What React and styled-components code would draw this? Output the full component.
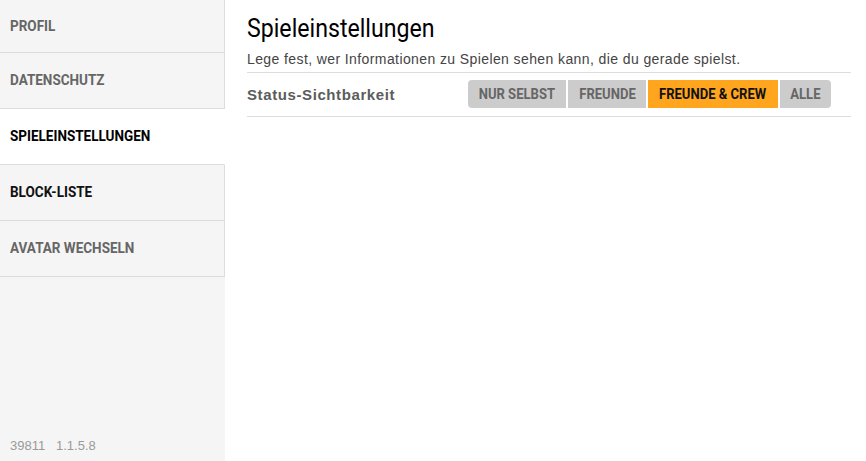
import React from "react";
import styled, { createGlobalStyle } from "styled-components";

const Global = createGlobalStyle`
  html, body { margin: 0; padding: 0; height: 100%; background: #fff; }
  #root { height: 100%; }
  * { box-sizing: border-box; }
`;

const Page = styled.div`
  display: flex;
  width: 866px;
  height: 461px;
  overflow: hidden;
`;

const Sidebar = styled.nav`
  width: 225px;
  flex: none;
  background: #f5f5f5;
  display: flex;
  flex-direction: column;
`;

const NavItem = styled.div`
  height: 56px;
  flex: none;
  display: flex;
  align-items: center;
  padding-left: 10px;
  padding-bottom: 1px;
  background: ${(p) => (p.$active ? "#fff" : "#f5f5f5")};
  border-right: 1px solid ${(p) => (p.$active ? "#fff" : "#dcdcdc")};
  border-bottom: 1px solid #dcdcdc;
  &:first-child { height: 53px; }
`;

/* condensed look: no condensed family is installed, so Roboto is narrowed */
const Condensed = styled.span`
  display: inline-block;
  white-space: nowrap;
  font-family: Roboto, "Liberation Sans", sans-serif;
  font-weight: ${(p) => p.$weight || 700};
  font-size: ${(p) => p.$size || 15}px;
  transform: scaleX(${(p) => p.$scale || 0.9});
  transform-origin: ${(p) => p.$origin || "left"} center;
  color: ${(p) => p.$color || "inherit"};
`;

const Footer = styled.div`
  margin-top: auto;
  padding: 0 0 8px 10px;
  font-family: "Liberation Sans", Arial, sans-serif;
  font-size: 13px;
  color: #9a9a9a;
  white-space: pre;
`;

const Main = styled.main`
  flex: 1;
  padding: 10px 15px 0 22px;
`;

const Title = styled.h1`
  margin: 0;
  line-height: 32px;
  height: 32px;
  color: #000;
`;

const Subtitle = styled.p`
  margin: 9px 0 0;
  font-family: "Liberation Sans", Arial, sans-serif;
  font-size: 14px;
  letter-spacing: 0.4px;
  line-height: 16px;
  color: #444;
  padding-bottom: 5px;
  border-bottom: 1px solid #dddddd;
`;

const Row = styled.div`
  display: flex;
  align-items: center;
  height: 44px;
  padding-bottom: 1px;
  border-bottom: 1px solid #dddddd;
`;

const Label = styled.div`
  width: 221px;
  font-family: "Liberation Sans", Arial, sans-serif;
  font-size: 15px;
  font-weight: 700;
  letter-spacing: 0.6px;
  color: #5c5c5c;
`;

const Segments = styled.div`
  display: flex;
  gap: 2px;
  border-radius: 4px;
  overflow: hidden;
`;

const Segment = styled.button`
  width: ${(p) => p.$w}px;
  height: 28px;
  border: 0;
  margin: 0;
  padding: 0;
  display: flex;
  align-items: center;
  justify-content: center;
  background: ${(p) => (p.$active ? "#ffa61e" : "#cccccc")};
  color: ${(p) => (p.$active ? "#111" : "#666")};
  cursor: pointer;
  overflow: hidden;
`;

const navItems = [
  { label: "PROFIL", color: "#666" },
  { label: "DATENSCHUTZ", color: "#666" },
  { label: "SPIELEINSTELLUNGEN", active: true, color: "#000" },
  { label: "BLOCK-LISTE", color: "#111" },
  { label: "AVATAR WECHSELN", color: "#666" },
];

const options = [
  { label: "NUR SELBST", w: 98 },
  { label: "FREUNDE", w: 78 },
  { label: "FREUNDE & CREW", w: 130, active: true },
  { label: "ALLE", w: 51 },
];

export default function App() {
  return (
    <>
      <Global />
      <Page>
        <Sidebar>
          {navItems.map((n) => (
            <NavItem key={n.label} $active={n.active}>
              <Condensed $color={n.color}>{n.label}</Condensed>
            </NavItem>
          ))}
          <Footer>{"39811   1.1.5.8"}</Footer>
        </Sidebar>
        <Main>
          <Title>
            <Condensed $weight={400} $size={26} $scale={0.89}>
              Spieleinstellungen
            </Condensed>
          </Title>
          <Subtitle>
            Lege fest, wer Informationen zu Spielen sehen kann, die du gerade spielst.
          </Subtitle>
          <Row>
            <Label>Status-Sichtbarkeit</Label>
            <Segments>
              {options.map((o) => (
                <Segment key={o.label} $w={o.w} $active={o.active}>
                  <Condensed $origin="center" $size={15} $scale={0.87}>
                    {o.label}
                  </Condensed>
                </Segment>
              ))}
            </Segments>
          </Row>
        </Main>
      </Page>
    </>
  );
}
